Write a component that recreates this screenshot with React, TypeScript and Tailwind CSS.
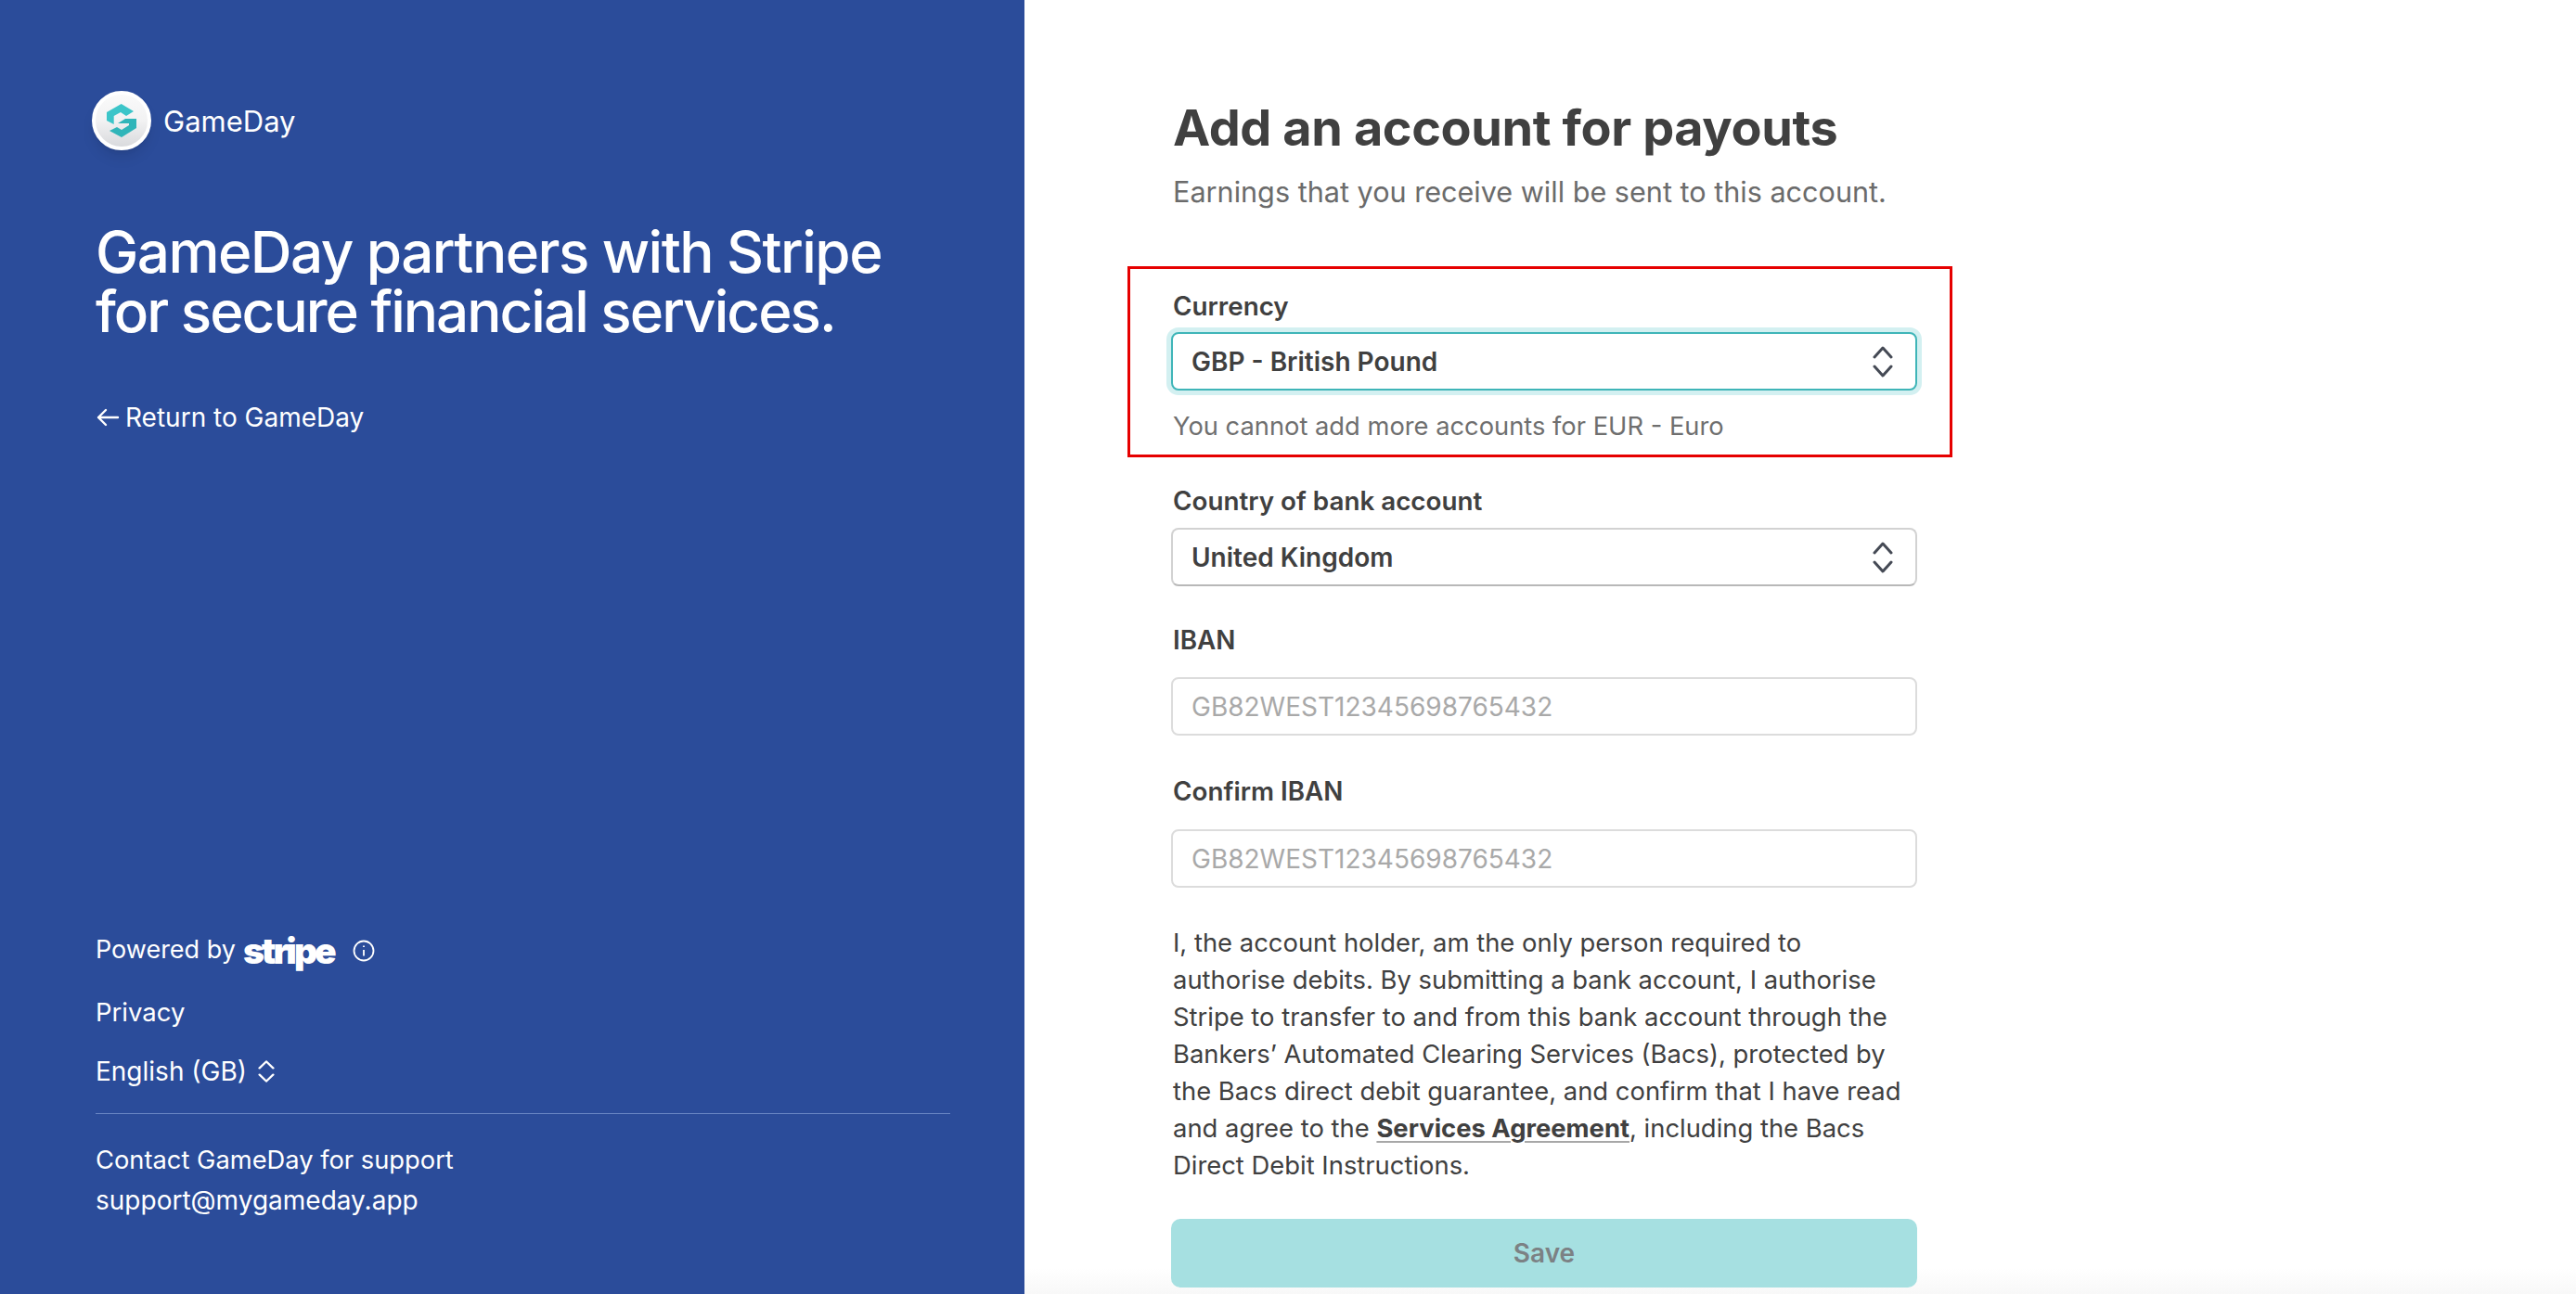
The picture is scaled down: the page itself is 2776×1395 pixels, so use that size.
import React from 'react';

const font = { fontFamily: 'Inter, sans-serif' };

const Chevrons = ({ className }: { className: string }) => (
  <svg className={className} viewBox="0 0 22 34" preserveAspectRatio="none" fill="none" stroke="currentColor" strokeWidth={3} strokeLinecap="round" strokeLinejoin="round">
    <path d="M2 12 11 2l9 10" />
    <path d="M2 22l9 10 9-10" />
  </svg>
);

const Logo = () => (
  <div className="w-16 h-16 rounded-full bg-gradient-to-b from-[#fafafa] via-[#f2f2f3] to-[#d9dadd] border-4 border-white flex items-center justify-center shadow-lg">
    <svg viewBox="0 0 32 36" className="w-[32px] h-[36px]">
      <path d="M15.7 0 29 8 21 13 15 9 7.7 13V22L0 18V9Z" fill="#3cc5c9" />
      <path d="M20 16H32V26L16 36 3 29 11 25 16 28 24 23V21H12Z" fill="#30b5b9" />
    </svg>
  </div>
);

const Select = ({ value, focused }: { value: string; focused?: boolean }) => (
  <div
    className={`h-[63px] -ml-[2px] rounded-[8px] bg-white flex items-center justify-between pl-[20px] pr-[24px] text-[28px] font-semibold text-[#404040] ${
      focused
        ? 'border-2 border-[#3fb5b8] ring-[5px] ring-[#d3f0f1]'
        : 'border-2 border-[#d2d2d2] border-b-[#b8b8b8]'
    }`}
  >
    <span>{value}</span>
    <Chevrons className="w-[22px] h-[34px] text-[#454a55]" />
  </div>
);

const Input = ({ placeholder }: { placeholder: string }) => (
  <div className="h-[63px] -ml-[2px] rounded-[8px] bg-white border-2 border-[#dcdcdc] flex items-center pl-[20px] text-[28px] text-[#a9a9a9]">
    {placeholder}
  </div>
);

const Label = ({ children, gap }: { children: React.ReactNode; gap: string }) => (
  <div className={`text-[27.8px] font-semibold text-[#404040] leading-[34px] ${gap}`}>{children}</div>
);

export default function App() {
  return (
    <div style={font} className="flex w-[2776px] h-[1395px] overflow-hidden bg-white">
      {/* Left panel */}
      <aside className="w-[1104px] shrink-0 bg-[#2b4c9a] text-white flex flex-col pl-[103px] pr-[80px]">
        <div className="flex items-center gap-[13px] -ml-[4px] mt-[98px]">
          <Logo />
          <span className="text-[31px] leading-none">GameDay</span>
        </div>
        <h1 className="text-[62px] leading-[64px] tracking-[-1.55px] mt-[78px] font-[450]">
          GameDay partners with Stripe<br />
          <span className="tracking-[-2px]">for secure financial services.</span>
        </h1>
        <div className="text-[28px] mt-[61px] flex items-center gap-[6px]">
          <svg viewBox="0 0 24 22" className="w-[26px] h-[22px]" fill="none" stroke="currentColor" strokeWidth={2.4} strokeLinecap="round" strokeLinejoin="round">
            <path d="M23 11H2M10 3l-8 8 8 8" />
          </svg>
          Return to GameDay
        </div>

        <div className="mt-auto mb-[80px] text-[28px]">
          <div className="flex items-center gap-[8px] text-[27px]">
            Powered by
            <span className="text-[39px] font-black tracking-[-3px] leading-none">stripe</span>
            <svg viewBox="0 0 24 24" className="w-[24px] h-[24px] ml-[12px]" fill="none" stroke="currentColor" strokeWidth={1.8}>
              <circle cx="12" cy="12" r="10.5" />
              <path d="M12 11v6.5M12 6.5v1.6" />
            </svg>
          </div>
          <div className="mt-[26px] text-[27.5px]">Privacy</div>
          <div className="mt-[22px] flex items-center gap-[12px]">
            English (GB)
            <Chevrons className="w-[18px] h-[24px]" />
          </div>
          <div className="mt-[24px] h-[1px] bg-[#6a86c4]" />
          <div className="mt-[30px] text-[27.3px]">Contact GameDay for support</div>
          <div className="mt-[1px]">support@mygameday.app</div>
        </div>
      </aside>

      {/* Form */}
      <div className="flex-1 bg-gradient-to-b from-white from-[98%] to-[#f8f8f8]">
        <main className="ml-[160px] w-[802px] pt-[104px]">
          <h2 className="text-[54px] leading-[68px] tracking-[-0.4px] font-bold text-[#404040]">Add an account for payouts</h2>
          <p className="text-[30.6px] leading-[40px] mt-[15px] text-[#6b6b6b] whitespace-nowrap">Earnings that you receive will be sent to this account.</p>

          <section className="relative mt-[86px]">
            <div className="absolute -left-[49px] -top-[26px] -right-[38px] -bottom-[12px] border-[3px] border-[#e60000] pointer-events-none" />
            <Label gap="mb-[11px]">Currency</Label>
            <Select value="GBP - British Pound" focused />
            <div className="text-[27.3px] leading-[42px] mt-[18px] text-[#6f6f6f]">You cannot add more accounts for EUR - Euro</div>
          </section>

          <section className="mt-[42px]">
            <Label gap="mb-[12px]">Country of bank account</Label>
            <Select value="United Kingdom" />
          </section>
          <section className="mt-[41px]">
            <Label gap="mb-[23px]">IBAN</Label>
            <Input placeholder="GB82WEST12345698765432" />
          </section>
          <section className="mt-[43px]">
            <Label gap="mb-[24px]">Confirm IBAN</Label>
            <Input placeholder="GB82WEST12345698765432" />
          </section>

          <p className="text-[27.4px] leading-[40px] mt-[39px] text-[#404040]">
            I, the account holder, am the only person required to authorise debits. By submitting a bank account, I authorise Stripe to transfer to and from this bank account through the Bankers’ Automated Clearing Services (Bacs), protected by the Bacs direct debit guarantee, and confirm that I have read and agree to the{' '}
            <span className="font-bold underline decoration-[#a8a8a8] decoration-2 underline-offset-4">Services Agreement</span>, including the Bacs Direct Debit Instructions.
          </p>

          <button className="block w-[804px] h-[74px] -ml-[2px] rounded-[10px] mt-[38px] bg-[#a6e0e1] text-[#7c8184] text-[28px] font-semibold">Save</button>
        </main>
      </div>
    </div>
  );
}
